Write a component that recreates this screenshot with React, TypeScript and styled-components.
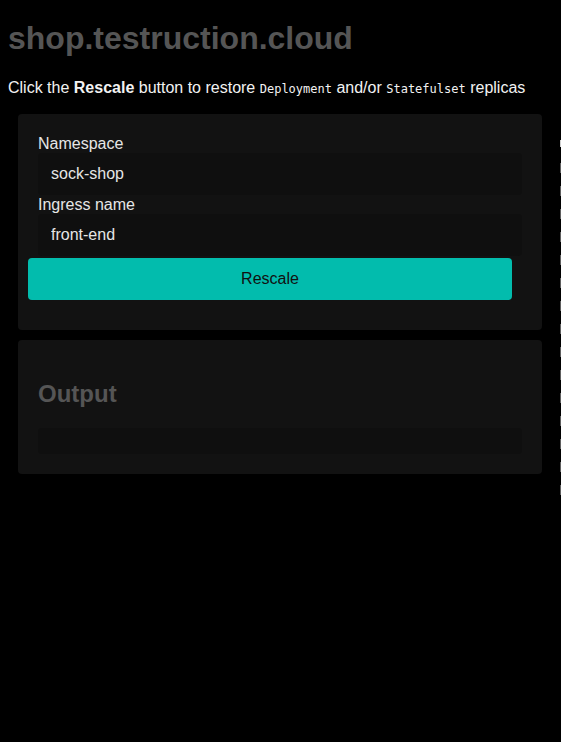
import styled, { createGlobalStyle } from "styled-components"

const GlobalStyle = createGlobalStyle`
    html {
        background: #000;
        overflow: hidden;
    }
    body {
        margin: 8px;
        font-family: "Liberation Sans", Arial, sans-serif;
        color: #e8e8e8;
    }
`

const Field = ({ label, value }: { label: string; value: string }) => (
    <>
        <FieldLabel>{label}</FieldLabel>
        <FieldInput defaultValue={value} />
    </>
)

export default function App() {
    return (
        <Main>
            <GlobalStyle />
            <Title>shop.testruction.cloud</Title>
            <Intro>
                Click the <b>Rescale</b> button to restore <Code>Deployment</Code> and/or{" "}
                <Code>Statefulset</Code> replicas
            </Intro>
            <Card>
                <Field label="Namespace" value="sock-shop" />
                <Field label="Ingress name" value="front-end" />
                <RescaleButton>Rescale</RescaleButton>
            </Card>
            <Card>
                <OutputTitle>Output</OutputTitle>
                <OutputBox />
            </Card>
            <Rail>
                <RailTick $first />
                {Array.from({ length: 15 }, (_, i) => (
                    <RailTick key={i} />
                ))}
            </Rail>
        </Main>
    )
}

const Main = styled.div`
    width: 552px;
`

// dashed edge line peeking in at the right side of the window
const Rail = styled.div`
    position: fixed;
    top: 140px;
    right: 0;
    width: 1px;
    display: flex;
    flex-direction: column;
    gap: 13px;
`

const RailTick = styled.div<{ $first?: boolean }>`
    width: 1px;
    height: ${({ $first }) => ($first ? "7px" : "10px")};
    margin-bottom: ${({ $first }) => ($first ? "3px" : "0")};
    background: ${({ $first }) => ($first ? "#d0d0d0" : "#5e5e5e")};
`

const Title = styled.h1`
    margin: 12px 0 0;
    font-size: 32px;
    line-height: 37px;
    font-weight: 700;
    color: #555;
`

const Intro = styled.p`
    margin: 22px 0 17px;
    font-size: 16px;
    line-height: 18px;
    color: #f2f2f2;
`

const Code = styled.code`
    font-family: "DejaVu Sans Mono", "Liberation Mono", monospace;
    font-size: 12px;
    line-height: 1;
`

const Card = styled.div`
    display: flex;
    flex-direction: column;
    margin: 0 18px 10px 10px;
    padding: 20px 20px 30px;
    background: #121212;
    border-radius: 4px;

    & + & {
        padding-bottom: 20px;
    }
`

const FieldLabel = styled.label`
    font-size: 16px;
    line-height: 19px;
    color: #e6e6e6;
`

const FieldInput = styled.input`
    box-sizing: border-box;
    height: 42px;
    width: 100%;
    padding: 0 13px;
    border: none;
    outline: none;
    border-radius: 4px;
    background: #0f0f0f;
    color: #e6e6e6;
    font-family: "Liberation Sans", Arial, sans-serif;
    font-size: 16px;
`

const RescaleButton = styled.button`
    width: 484px;
    height: 42px;
    margin: 2px 0 0 -10px;
    border: none;
    border-radius: 4px;
    background: #02bcad;
    color: #111;
    font-family: "Liberation Sans", Arial, sans-serif;
    font-size: 16px;
`

const OutputTitle = styled.h2`
    margin: 20px 0;
    font-size: 24px;
    line-height: 28px;
    font-weight: 700;
    color: #555;
`

const OutputBox = styled.div`
    height: 26px;
    border-radius: 4px;
    background: #0f0f0f;
`
